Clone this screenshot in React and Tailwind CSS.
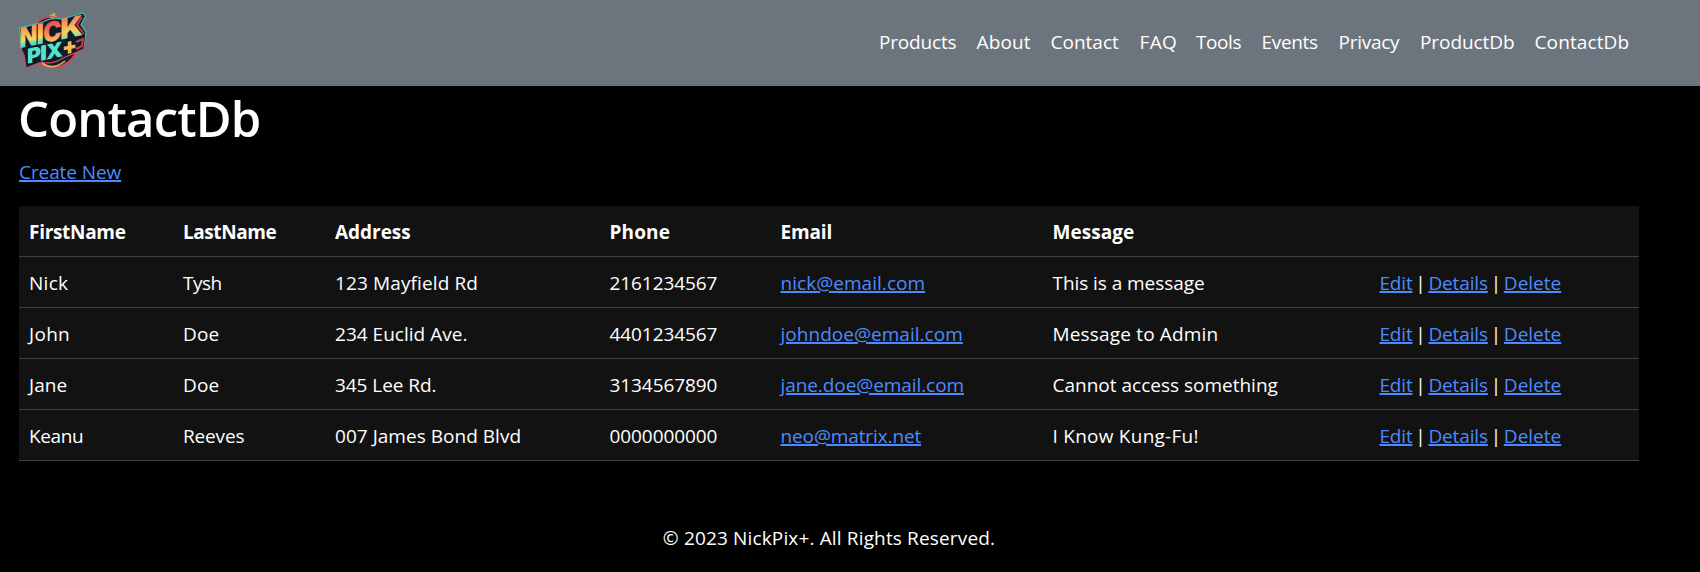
import React from "react";

const navItems = [
  { label: "Products", look: "w-[77.5px] tracking-[-0.17px]" },
  { label: "About", look: "w-[54px] tracking-[0.14px]" },
  { label: "Contact", look: "w-[69px] tracking-[0px]" },
  { label: "FAQ", look: "w-[36.5px] tracking-[0.34px]" },
  { label: "Tools", look: "w-[45.5px] tracking-[-0.4px]" },
  { label: "Events", look: "w-[57px] tracking-[-0.33px]" },
  { label: "Privacy", look: "w-[61.5px] tracking-[-0.27px]" },
  { label: "ProductDb", look: "w-[94.5px] tracking-[-0.07px]" },
  { label: "ContactDb", look: "w-[94.5px] tracking-[0.12px]" },
];

const columns = [
  { label: "FirstName", look: "w-[154px] tracking-[-0.3px]" },
  { label: "LastName", look: "w-[152px] tracking-[-0.43px]" },
  { label: "Address", look: "w-[274.5px] tracking-[-0.03px]" },
  { label: "Phone", look: "w-[171px] tracking-[0.13px]" },
  { label: "Email", look: "w-[272px] tracking-[-0.14px]" },
  { label: "Message", look: "w-[327px] tracking-[0.04px]" },
  { label: "", look: "w-[269.5px]" },
];

const contacts = [
  {
    first: ["Nick", "tracking-[0.27px]"],
    last: ["Tysh", "tracking-[-0.5px]"],
    address: ["123 Mayfield Rd", "tracking-[0.12px]"],
    phone: "2161234567",
    email: ["nick@email.com", "tracking-[0.04px]"],
    message: ["This is a message", "tracking-[-0.06px]"],
  },
  {
    first: ["John", "tracking-[0.3px]"],
    last: ["Doe", "tracking-[0.2px]"],
    address: ["234 Euclid Ave.", "tracking-[0.02px]"],
    phone: "4401234567",
    email: ["johndoe@email.com", "tracking-[0.03px]"],
    message: ["Message to Admin", "tracking-[0.17px]"],
  },
  {
    first: ["Jane", "tracking-[0.1px]"],
    last: ["Doe", "tracking-[0.2px]"],
    address: ["345 Lee Rd.", "tracking-[-0.06px]"],
    phone: "3134567890",
    email: ["jane.doe@email.com", "tracking-[-0.08px]"],
    message: ["Cannot access something", "tracking-[0px]"],
  },
  {
    first: ["Keanu", "tracking-[-0.38px]"],
    last: ["Reeves", "tracking-[-0.15px]"],
    address: ["007 James Bond Blvd", "tracking-[0.03px]"],
    phone: "0000000000",
    email: ["neo@matrix.net", "tracking-[-0.12px]"],
    message: ["I Know Kung-Fu!", "tracking-[0.25px]"],
  },
];

const linkLook = "text-[#4b8bff] underline decoration-2 underline-offset-1";

function LogoLetter({ x, y, width, size, fill, children }) {
  return (
    <text
      x={x}
      y={y}
      textLength={width}
      lengthAdjust="spacingAndGlyphs"
      fontSize={size}
      fill={fill}
    >
      {children}
    </text>
  );
}

function Logo() {
  return (
    <svg width="74" height="64" viewBox="17 10 74 64" aria-label="NickPix+">
      <defs>
        <linearGradient id="warmMint" x1="0" y1="0" x2="0" y2="1">
          <stop offset="0.2" stopColor="#f98f55" />
          <stop offset="0.6" stopColor="#f9d65c" />
          <stop offset="0.72" stopColor="#4fe0c0" />
        </linearGradient>
        <linearGradient id="redGold" x1="0" y1="0" x2="0" y2="1">
          <stop offset="0.2" stopColor="#e9494f" />
          <stop offset="0.55" stopColor="#f58a55" />
          <stop offset="0.8" stopColor="#f8c35c" />
        </linearGradient>
        <linearGradient id="goldMint" x1="0" y1="0" x2="0" y2="1">
          <stop offset="0.25" stopColor="#f58a55" />
          <stop offset="0.6" stopColor="#f8d05c" />
          <stop offset="0.8" stopColor="#8fe0a0" />
        </linearGradient>
        <linearGradient id="edge" x1="0" y1="0" x2="0" y2="1">
          <stop offset="0.45" stopColor="#43b5a4" />
          <stop offset="0.7" stopColor="#d4475a" />
        </linearGradient>
      </defs>
      <circle cx="53" cy="42" r="25.5" fill="#10202f" stroke="#d4475a" strokeWidth="2.2" />
      <path d="M42 63 Q53 71 65 61" fill="none" stroke="#f2b04f" strokeWidth="1.6" />
      <path
        d="M19.5 28 L42 22.5 Q52 17 62 19 L83 13 L85.5 16 L81 25 L86 32 L85.5 38 L84 49 L63 58 Q52 65 42 62 L26 68 L24 55 L21.5 50 Z"
        fill="#0e1b2b"
        stroke="url(#edge)"
        strokeWidth="1.3"
      />
      <path d="M82 17 L77 25 L84 34" fill="none" stroke="#b93a50" strokeWidth="2" />
      <path d="M76 42 L83 39 L82 46 L76 49" fill="none" stroke="#c43f52" strokeWidth="2" />
      <path d="M53 12.5 V19 M49.5 15 L56.5 16.5 M50.5 18 L55.5 13.5" stroke="#d9b545" strokeWidth="1.2" />
      <g transform="skewY(-12)" fontFamily="Inter, sans-serif" fontWeight="900">
        <LogoLetter x="19.5" y="52.5" width="18" size="28" fill="url(#warmMint)">N</LogoLetter>
        <LogoLetter x="36.5" y="52.5" width="7.5" size="28" fill="url(#warmMint)">I</LogoLetter>
        <LogoLetter x="43" y="52.5" width="18.5" size="27.5" fill="url(#redGold)">C</LogoLetter>
        <LogoLetter x="60" y="52.5" width="23" size="28" fill="url(#goldMint)">K</LogoLetter>
        <LogoLetter x="27" y="69.5" width="14" size="20.5" fill="#55e3c5">P</LogoLetter>
        <LogoLetter x="40" y="69.5" width="7" size="20.5" fill="#55e3c5">I</LogoLetter>
        <LogoLetter x="46" y="69.5" width="17" size="20.5" fill="#55e3c5">X</LogoLetter>
        <LogoLetter x="62" y="69" width="15" size="23" fill="#f8b755">+</LogoLetter>
      </g>
    </svg>
  );
}

function Cell({ className, children }) {
  return (
    <td className="border-b border-[#404142] px-[10px] pt-[11px] pb-[9px]">
      <span className={className}>{children}</span>
    </td>
  );
}

export default function App() {
  return (
    <div className="h-[572px] overflow-hidden bg-black font-['Open_Sans',sans-serif] text-[19px] leading-[30px] text-white">
      <header className="flex h-[86px] items-start bg-[#6c757d] pr-[71px] pl-[17px]">
        <a href="#" className="mt-[10px] block shrink-0">
          <Logo />
        </a>
        <nav className="mt-[27px] ml-auto flex gap-5 whitespace-nowrap">
          {navItems.map((item) => (
            <a key={item.label} href="#" className={item.look}>
              {item.label}
            </a>
          ))}
        </nav>
      </header>

      <main className="w-[1639px] pl-[19px]">
        <h1 className="mt-[2px] -ml-px h-[60px] text-[49px] leading-[60px] font-semibold tracking-[-0.85px]">
          ContactDb
        </h1>
        <p className="mt-[9px]">
          <a href="#" className={`${linkLook} tracking-[-0.09px]`}>
            Create New
          </a>
        </p>

        <table className="mt-[19px] w-[1620px] table-fixed border-separate border-spacing-0 bg-[#121212] text-left whitespace-nowrap">
          <thead>
            <tr>
              {columns.map((column) => (
                <th
                  key={column.label}
                  className={`border-b border-[#404142] px-[10px] pt-[11px] pb-[9px] font-bold ${column.look}`}
                >
                  {column.label}
                </th>
              ))}
            </tr>
          </thead>
          <tbody>
            {contacts.map((c) => (
              <tr key={c.phone}>
                <Cell className={c.first[1]}>{c.first[0]}</Cell>
                <Cell className={c.last[1]}>{c.last[0]}</Cell>
                <Cell className={c.address[1]}>{c.address[0]}</Cell>
                <Cell className="tracking-[-0.08px]">{c.phone}</Cell>
                <Cell>
                  <a href="#" className={`${linkLook} ${c.email[1]}`}>
                    {c.email[0]}
                  </a>
                </Cell>
                <Cell className={c.message[1]}>{c.message[0]}</Cell>
                <Cell>
                  <a href="#" className={`${linkLook} tracking-[-0.2px]`}>Edit</a>
                  <span className="inline-block w-4 text-center">|</span>
                  <a href="#" className={`${linkLook} tracking-[-0.15px]`}>Details</a>
                  <span className="inline-block w-4 text-center">|</span>
                  <a href="#" className={linkLook}>Delete</a>
                </Cell>
              </tr>
            ))}
          </tbody>
        </table>
      </main>

      <footer className="mt-[62px] w-[1658px] text-center tracking-[0.15px]">
        © 2023 NickPix+. All Rights Reserved.
      </footer>
    </div>
  );
}
